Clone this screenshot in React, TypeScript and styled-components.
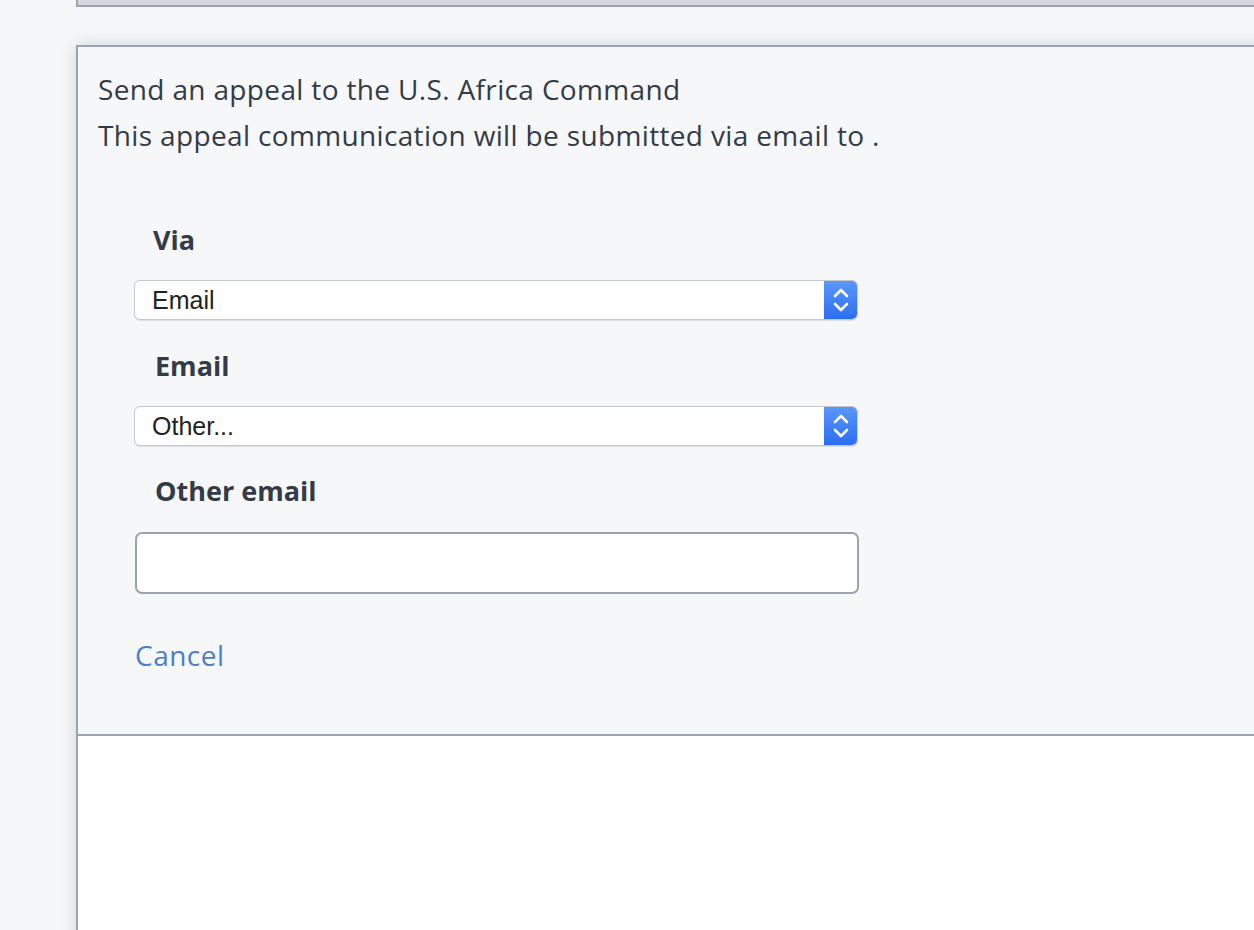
import styled, { createGlobalStyle } from "styled-components";

const GlobalStyle = createGlobalStyle`
  html, body {
    margin: 0;
    padding: 0;
    background: #f5f6f8;
    overflow: hidden;
  }
  * {
    box-sizing: border-box;
  }
`;

const Layout = styled.div`
  min-height: 930px;
  padding-left: 76px;
  font-family: "Open Sans", Lato, sans-serif;
  color: #343b46;
`;

const TopBar = styled.div`
  width: calc(100% + 20px);
  height: 7px;
  background: #d5d9de;
  border: 2px solid #9ba3ae;
  border-top: none;
`;

const Panel = styled.div`
  width: calc(100% + 20px);
  margin-top: 38px;
  min-height: 900px;
  background: #ffffff;
  border-top: 2px solid #9ba3ae;
  border-left: 2px solid #9ba3ae;
  box-shadow: 0 0 14px rgba(60, 70, 85, 0.18);
`;

const FormArea = styled.div`
  background: #f6f7f9;
  border-bottom: 2px solid #9ba3ae;
  padding: 19px 0 59px 20px;
`;

const Intro = styled.p`
  margin: 0;
  font-size: 28px;
  letter-spacing: 0.35px;
  line-height: 46px;
`;

const Form = styled.div`
  width: 780px;
  padding: 62px 0 0 36px;
  display: flex;
  flex-direction: column;
`;

const Label = styled.label<{ $indent?: number; $top?: number }>`
  display: block;
  margin: ${(p) => p.$top ?? 26}px 0 20px ${(p) => p.$indent ?? 20}px;
  font-size: 27px;
  font-weight: 700;
  line-height: 40px;
`;

const SelectBox = styled.div`
  display: flex;
  align-items: stretch;
  width: 724px;
  height: 40px;
  background: #ffffff;
  border: 1px solid #c5c7ca;
  border-radius: 6px;
  box-shadow: 0 1px 1px rgba(0, 0, 0, 0.1);
  overflow: hidden;
`;

const SelectText = styled.span`
  flex: 1;
  padding-left: 17px;
  font-family: "Liberation Sans", Arial, sans-serif;
  font-size: 25px;
  line-height: 39px;
  color: #222222;
`;

const Stepper = styled.span`
  width: 33px;
  display: flex;
  align-items: center;
  justify-content: center;
  background: linear-gradient(#5a97f8, #2b6ef4);
`;

const TextInput = styled.input`
  width: 724px;
  height: 62px;
  margin: 1px 0 0 1px;
  background: #ffffff;
  border: 2px solid #9ba3ae;
  border-radius: 7px;
  outline: none;
`;

const CancelLink = styled.a`
  display: block;
  margin: 41px 0 0 1px;
  font-size: 28px;
  letter-spacing: 0.5px;
  line-height: 40px;
  color: #4a80c7;
  text-decoration: none;
  cursor: pointer;
`;

function Chevrons() {
  return (
    <svg width="18" height="28" viewBox="0 0 18 28" fill="none">
      <path d="M3 10 L9 4 L15 10" stroke="#fff" strokeWidth="2.6" strokeLinecap="round" strokeLinejoin="round" />
      <path d="M3 18 L9 24 L15 18" stroke="#fff" strokeWidth="2.6" strokeLinecap="round" strokeLinejoin="round" />
    </svg>
  );
}

function Select({ value }: { value: string }) {
  return (
    <SelectBox>
      <SelectText>{value}</SelectText>
      <Stepper>
        <Chevrons />
      </Stepper>
    </SelectBox>
  );
}

export default function App() {
  return (
    <Layout>
      <GlobalStyle />
      <TopBar />
      <Panel>
        <FormArea>
          <Intro>Send an appeal to the U.S. Africa Command</Intro>
          <Intro>This appeal communication will be submitted via email to .</Intro>
          <Form>
            <Label $top={0} $indent={19}>Via</Label>
            <Select value="Email" />
            <Label $indent={21}>Email</Label>
            <Select value="Other..." />
            <Label $indent={21} $top={25}>Other email</Label>
            <TextInput type="text" />
            <CancelLink>Cancel</CancelLink>
          </Form>
        </FormArea>
      </Panel>
    </Layout>
  );
}
